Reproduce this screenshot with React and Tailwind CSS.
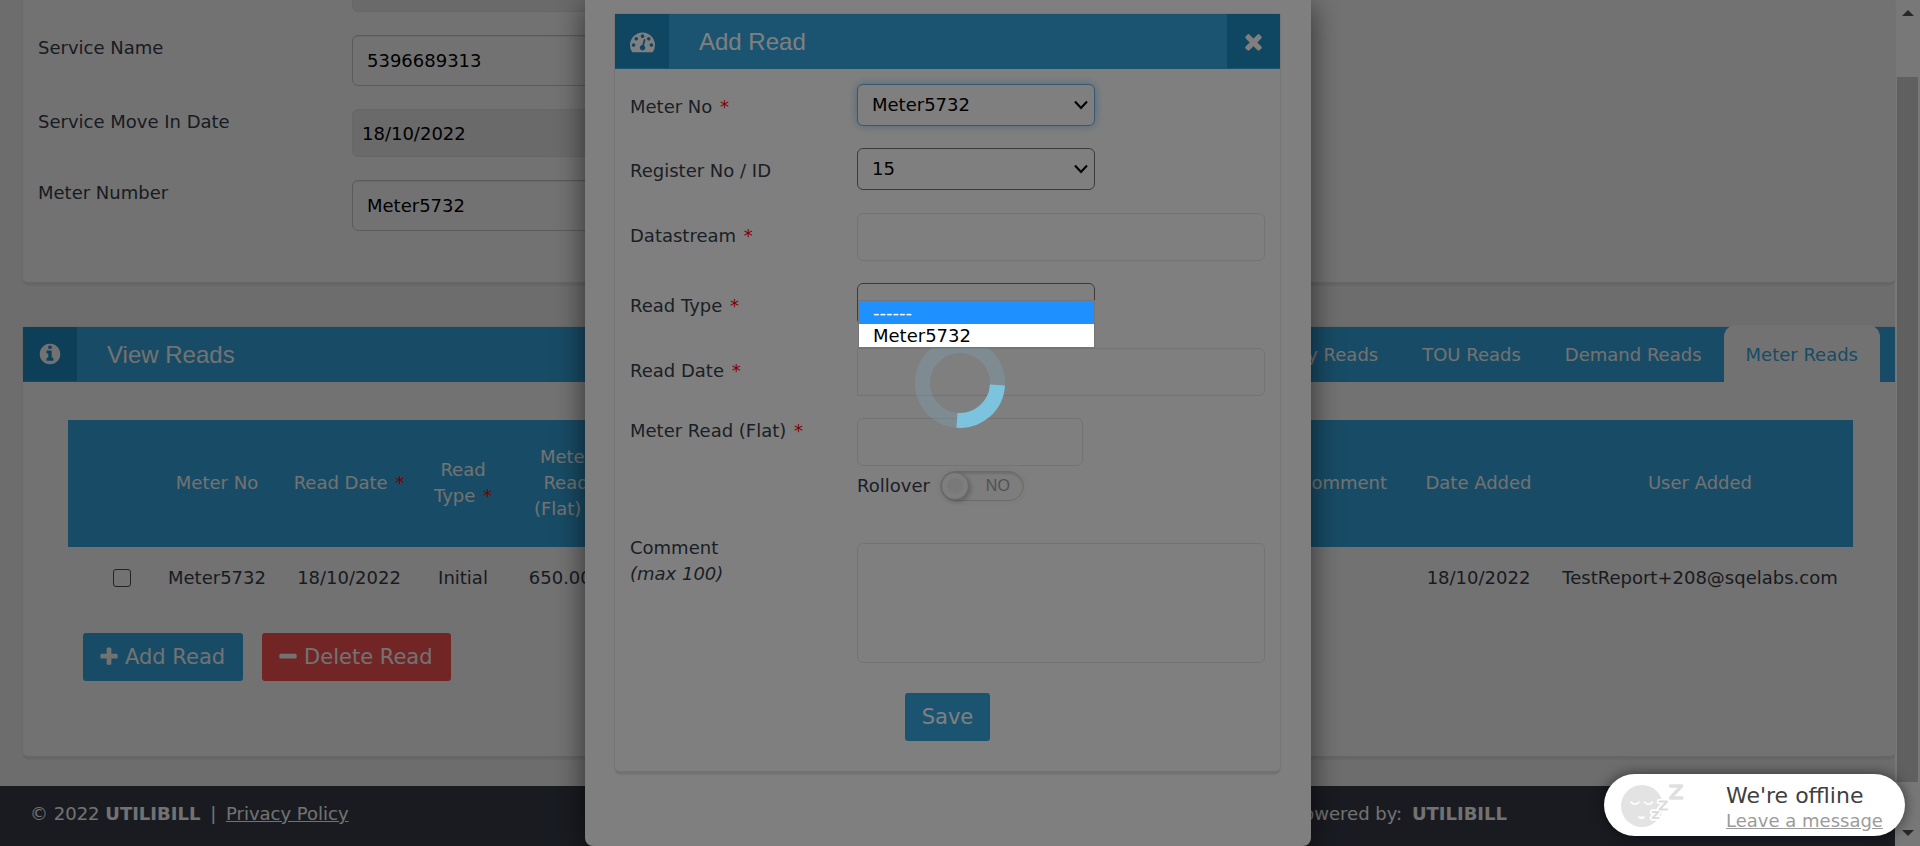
const iconPaths = {
  info: "M1152 1376v-160q0-14-9-23t-23-9h-96v-512q0-14-9-23t-23-9h-320q-14 0-23 9t-9 23v160q0 14 9 23t23 9h96v320h-96q-14 0-23 9t-9 23v160q0 14 9 23t23 9h448q14 0 23-9t9-23zm-128-896v-160q0-14-9-23t-23-9h-192q-14 0-23 9t-9 23v160q0 14 9 23t23 9h192q14 0 23-9t9-23zm640 416q0 209-103 385.5t-279.5 279.5-385.5 103-385.5-103-279.5-279.5-103-385.5 103-385.5 279.5-279.5 385.5-103 385.5 103 279.5 279.5 103 385.5z",
  times: "M1490 1322q0 40-28 68l-136 136q-28 28-68 28t-68-28l-294-294-294 294q-28 28-68 28t-68-28l-136-136q-28-28-28-68t28-68l294-294-294-294q-28-28-28-68t28-68l136-136q28-28 68-28t68 28l294 294 294-294q28-28 68-28t68 28l136 136q28 28 28 68t-28 68l-294 294 294 294q28 28 28 68z",
  plus: "M1600 736v192q0 40-28 68t-68 28h-416v416q0 40-28 68t-68 28h-192q-40 0-68-28t-28-68v-416h-416q-40 0-68-28t-28-68v-192q0-40 28-68t68-28h416v-416q0-40 28-68t68-28h192q40 0 68 28t28 68v416h416q40 0 68 28t28 68z",
  minus: "M1600 736v192q0 40-28 68t-68 28h-1216q-40 0-68-28t-28-68v-192q0-40 28-68t68-28h1216q40 0 68 28t28 68z",
  gauge: "M384 1152q0-53-37.5-90.5t-90.5-37.5-90.5 37.5-37.5 90.5 37.5 90.5 90.5 37.5 90.5-37.5 37.5-90.5zm192-448q0-53-37.5-90.5t-90.5-37.5-90.5 37.5-37.5 90.5 37.5 90.5 90.5 37.5 90.5-37.5 37.5-90.5zm428 481l101-382q6-26-7.5-48.5t-38.5-29.5-48 6.5-30 39.5l-101 382q-60 5-107 43.5t-63 98.5q-20 77 20 146t117 89 146-20 89-117q16-60-6-117t-72-91zm660-33q0-53-37.5-90.5t-90.5-37.5-90.5 37.5-37.5 90.5 37.5 90.5 90.5 37.5 90.5-37.5 37.5-90.5zm-640-640q0-53-37.5-90.5t-90.5-37.5-90.5 37.5-37.5 90.5 37.5 90.5 90.5 37.5 90.5-37.5 37.5-90.5zm448 192q0-53-37.5-90.5t-90.5-37.5-90.5 37.5-37.5 90.5 37.5 90.5 90.5 37.5 90.5-37.5 37.5-90.5zm320 448q0 261-141 483-19 29-54 29h-1402q-35 0-54-29-141-221-141-483 0-182 71-348t191-286 286-191 348-71 348 71 286 191 191 286 71 348z",
};

const Icon = ({ name, size }) => (
  <svg width={size} height={size} viewBox="0 0 1792 1792" fill="#fff" aria-hidden="true">
    <path d={iconPaths[name]} />
  </svg>
);

const Required = () => <span className="ml-0.5 text-[#ff0000]"> *</span>;

function PageRow({ id, label, value, locked }) {
  return (
    <div className="flex">
      <label htmlFor={id} className="w-[314px] leading-[26px]">{label}</label>
      <input
        id={id}
        defaultValue={value}
        disabled={locked}
        className={
          locked
            ? "h-12 w-[500px] rounded-md border border-[#e6e6e6] bg-[#eeeeee] px-[9px] text-black"
            : "h-[51px] w-[500px] rounded-md border border-[#cccccc] bg-white px-3.5 text-black shadow-[inset_0_1px_1px_rgba(0,0,0,0.075)]"
        }
      />
    </div>
  );
}

function SelectBox({ id, value, focused }) {
  return (
    <div className="relative w-[238px]">
      <select
        id={id}
        defaultValue={value}
        className={
          focused
            ? "block h-[42px] w-full appearance-none rounded-md border border-[#66afe9] bg-white pl-3.5 text-black shadow-[0_0_10px_rgba(102,175,233,0.6)]"
            : "block h-[42px] w-full appearance-none rounded-md border border-[#767676] bg-white pl-3.5 text-black"
        }
      >
        <option>{value}</option>
      </select>
      <svg className="pointer-events-none absolute right-[7px] top-[16px]" width="14" height="10" viewBox="0 0 14 10" fill="none" stroke="#000" strokeWidth="2">
        <path d="M1 1.5 7 8l6-6.5" />
      </svg>
    </div>
  );
}

function FormRow({ id, label, required, gap, children }) {
  return (
    <div className={gap}>
      <div className="flex">
        <label htmlFor={id} className="w-[227px] shrink-0 pt-2.5 leading-[26px]">
          {label}
          {required && <Required />}
        </label>
        {children}
      </div>
    </div>
  );
}

const tabs = ["Daily Reads", "TOU Reads", "Demand Reads"];
const panel = "bg-white shadow-[0_0_2px_rgba(0,0,0,0.15)] border-b-[3px] border-[#e4e4e4]";
const modalInput = "rounded-md border border-[#e6e6e6] bg-white px-2.5";

function Page() {
  return (
    <div className="flex flex-col bg-[#f4f4f4]">
      <main className="flex-1 pl-[23px]">
        <section className={`${panel} h-[285px] overflow-hidden rounded-b-md pl-[15px]`}>
          <div className="-mt-9 flex flex-col gap-[23px]">
            <PageRow id="service-no" label="" value="" locked />
            <PageRow id="service-name" label="Service Name" value="5396689313" />
            <PageRow id="move-in" label="Service Move In Date" value="18/10/2022" locked />
            <PageRow id="meter-number" label="Meter Number" value="Meter5732" />
          </div>
        </section>

        <section className={`${panel} mt-[42px] rounded-b-md`}>
          <header className="flex h-[55px] bg-[#36a9e1]">
            <div className="flex h-[54px] w-[54px] items-center justify-center bg-[#1e8fc6]">
              <Icon name="info" size={24} />
            </div>
            <h2 className="pl-[30px] font-['Liberation_Sans',sans-serif] text-2xl leading-[55px] text-white">View Reads</h2>
            <nav className="ml-auto flex pr-[15px]">
              {tabs.map((t) => (
                <a key={t} href="#" className="px-[22px] leading-[55px] text-white">{t}</a>
              ))}
              <a href="#" className="-mt-0.5 h-[57px] rounded-t-xl bg-white px-[22px] leading-[59px] text-[#36a9e1]">Meter Reads</a>
            </nav>
          </header>
          <div className="pb-[75px] pl-[45px] pr-[42px] pt-[38px]">
            <table className="w-full table-fixed text-center">
              <colgroup>
                <col className="w-[85px]" />
                <col className="w-32" />
                <col className="w-[136px]" />
                <col className="w-[92px]" />
                <col className="w-[114px]" />
                <col />
                <col className="w-[130px]" />
                <col className="w-[137px]" />
                <col className="w-[306px]" />
              </colgroup>
              <thead>
                <tr className="h-[127px] bg-[#36a9e1] leading-[26px] text-white">
                  <th />
                  <th className="pb-0.5 font-normal">Meter No</th>
                  <th className="pb-0.5 font-normal">Read Date<Required /></th>
                  <th className="pb-0.5 font-normal">Read<br />Type<Required /></th>
                  <th className="pb-0.5 font-normal">Meter<br />Read<br />(Flat)<Required /></th>
                  <th />
                  <th className="pb-0.5 pr-1 font-normal">Comment</th>
                  <th className="pb-0.5 font-normal">Date Added</th>
                  <th className="pb-0.5 font-normal">User Added</th>
                </tr>
              </thead>
              <tbody>
                <tr className="h-[61px] leading-[26px]">
                  <td className="pl-[22px]">
                    <input type="checkbox" aria-label="Select Meter5732" className="mx-auto block h-[18px] w-[18px] appearance-none rounded-[3px] border border-[#505050]" />
                  </td>
                  <td>Meter5732</td>
                  <td>18/10/2022</td>
                  <td>Initial</td>
                  <td>650.000</td>
                  <td />
                  <td />
                  <td>18/10/2022</td>
                  <td>TestReport+208@sqelabs.com</td>
                </tr>
              </tbody>
            </table>
            <div className="flex gap-[19px] pl-[15px] pt-[25px] text-[21px]">
              <button className="flex h-12 items-center gap-[5px] rounded-[3px] bg-[#36a9e1] pl-[15px] pr-[18px] text-white"><Icon name="plus" size={22} />Add Read</button>
              <button className="flex h-12 items-center gap-[5px] rounded-[3px] bg-[#ff5454] pl-[15px] pr-[18px] text-white"><Icon name="minus" size={22} />Delete Read</button>
            </div>
          </div>
        </section>
      </main>
      <footer className="mt-[27px] flex h-[60px] justify-between bg-[#383e4b] pl-[30px] pr-[388px] leading-[56px] text-white">
        <p>© 2022 <b>UTILIBILL</b> <span className="mx-1">|</span> <a href="#" className="underline">Privacy Policy</a></p>
        <p>Powered by: <b className="ml-1">UTILIBILL</b></p>
      </footer>
    </div>
  );
}

function AddReadDialog() {
  return (
    <div role="dialog" aria-label="Add Read" className="h-full w-[726px] rounded-b-lg bg-white pl-[30px] pr-[31px] pt-3.5 shadow-[0_5px_30px_rgba(0,0,0,0.6)]">
      <div className="rounded-b-md border-b-[3px] border-[#e4e4e4] bg-white shadow-[0_0_2px_rgba(0,0,0,0.25)]">
        <header className="flex h-[55px] bg-[#36a9e1]">
          <div className="flex h-[54px] w-[54px] items-center justify-center bg-[#1e8fc6]">
            <Icon name="gauge" size={25} />
          </div>
          <h2 className="flex-1 pl-[30px] font-['Liberation_Sans',sans-serif] text-2xl leading-[55px] text-white">Add Read</h2>
          <button aria-label="Close" className="flex h-[54px] w-[53px] items-center justify-center bg-[#1e8fc6]">
            <Icon name="times" size={25} />
          </button>
        </header>
        <form className="px-[15px] pb-[30px] pt-[15px]">
          <FormRow id="meter" label="Meter No" required gap="mb-[22px]">
            <SelectBox id="meter" value="Meter5732" focused />
          </FormRow>
          <FormRow id="register" label="Register No / ID" gap="mb-[23px]">
            <SelectBox id="register" value="15" />
          </FormRow>
          <FormRow id="datastream" label="Datastream" required gap="mb-[22px]">
            <input id="datastream" className={`${modalInput} h-12 min-w-0 flex-1`} />
          </FormRow>
          <FormRow id="read-type" label="Read Type" required gap="mb-[23px]">
            <SelectBox id="read-type" value="" />
          </FormRow>
          <FormRow id="read-date" label="Read Date" required gap="mb-[22px]">
            <input id="read-date" className="h-12 min-w-0 flex-1 rounded-r-md border border-[#e6e6e6] bg-white px-2.5" />
          </FormRow>
          <div className="flex">
            <label htmlFor="meter-read" className="w-[227px] leading-[26px]">Meter Read (Flat)<Required /></label>
            <div>
              <input id="meter-read" className={`${modalInput} block h-12 w-[226px]`} />
              <div className="mt-[5px] flex items-center gap-2.5">
                <label htmlFor="rollover">Rollover</label>
                <span className="relative flex h-[30px] w-[84px] rounded-full border border-[#d6d6d6] bg-[#fafafa] shadow-[inset_0_2px_2px_rgba(0,0,0,0.12),0_0_0_4px_rgba(0,0,0,0.02)]">
                  <input id="rollover" type="checkbox" role="switch" className="absolute inset-0 appearance-none" />
                  <span className="flex size-7 items-center justify-center rounded-full border border-[#d0d0d0] bg-[#fcfcfc] shadow-[2px_2px_4px_rgba(0,0,0,0.2)]">
                    <span className="size-4 rounded-full bg-[#f2f2f2]" />
                  </span>
                  <span className="flex-1 pl-1 text-center font-['Liberation_Sans',sans-serif] text-base leading-7 text-[#a4a4a4]">NO</span>
                </span>
              </div>
            </div>
          </div>
          <div className="mt-[34px] flex">
            <label htmlFor="comment" className="w-[227px] leading-[26px]">Comment<br /><i>(max 100)</i></label>
            <textarea id="comment" className={`${modalInput} mt-2 h-[120px] min-w-0 flex-1 resize-none`} />
          </div>
          <div className="mt-[30px] flex justify-center">
            <button type="button" className="h-12 rounded-[3px] bg-[#36a9e1] px-[17px] text-[21px] text-white">Save</button>
          </div>
        </form>
      </div>
    </div>
  );
}

function Scrollbar() {
  return (
    <div aria-hidden="true" className="flex w-[25px] flex-col items-center bg-[#f1f1f1] py-2.5">
      <svg width="12" height="6" viewBox="0 0 12 6" fill="#505050"><path d="M6 0l6 6H0z" /></svg>
      <div className="mb-[48px] mt-[61px] w-[21px] flex-1 bg-[#c1c1c1]" />
      <svg width="12" height="6" viewBox="0 0 12 6" fill="#505050"><path d="M6 6l6-6H0z" /></svg>
    </div>
  );
}

function Chat() {
  return (
    <a href="#" className="absolute bottom-2.5 right-[15px] flex h-[62px] w-[301px] items-center rounded-full bg-white pl-4 shadow-[0_0_14px_rgba(0,0,0,0.55)]">
      <svg width="66" height="46" viewBox="0 0 66 46">
        <circle cx="22" cy="24" r="21" fill="#e3e3e3" />
        <g fill="none" stroke="#fff" strokeWidth="1.6" strokeLinecap="round">
          <path d="M11 20q4 4.500 8 0" />
          <path d="M24.500 20q4 4.500 8 0" />
        </g>
        <path d="M17.500 34.500h8q-1 2.500-4 2.500t-4-2.500z" fill="#fff" />
        <g fill="none" strokeLinejoin="round" strokeLinecap="round">
          <path d="M32.500 30h6l-6 6h6M39.500 19.500h7.500l-7.500 8h7.500" stroke="#fff" strokeWidth="5.500" />
          <path d="M32.500 30h6l-6 6h6M39.500 19.500h7.500l-7.500 8h7.500" stroke="#dcdcdc" strokeWidth="2.200" />
          <path d="M50.500 4h11l-11 12h11.500" stroke="#e0e0e0" strokeWidth="3.600" />
        </g>
      </svg>
      <span className="ml-10 flex flex-col pt-1.5">
        <span className="text-[22px] leading-[26px] text-[#404040]">We're offline</span>
        <span className="leading-6 text-[#9b9b9b] underline">Leave a message</span>
      </span>
    </a>
  );
}

export default function App() {
  return (
    <div className="relative flex overflow-hidden font-['DejaVu_Sans',sans-serif] text-lg text-[#383e4b]">
      <div className="relative min-w-0 flex-1">
        <Page />
        <div className="absolute inset-0 bg-black/10" />
      </div>
      <Scrollbar />
      <div className="absolute inset-0 flex justify-center pr-6">
        <AddReadDialog />
      </div>
      <div className="absolute inset-0 bg-black/50" />
      <svg className="absolute left-1/2 top-[338px] -ml-[45px]" width="90" height="90" viewBox="0 0 90 90" fill="none" strokeWidth="15">
        <circle cx="45" cy="45" r="37.500" stroke="#7cc4de" strokeOpacity="0.2" />
        <path d="M82.450 47A37.500 37.500 0 0 1 42 82.380" stroke="#7cc4de" />
      </svg>
      <ul role="listbox" aria-label="Meter No" className="absolute left-1/2 top-[300px] -ml-[102px] w-[237px] border border-[#767676] bg-white text-black">
        <li role="option" aria-selected="true" className="bg-[#1e90ff] pl-3.5 leading-[23px] text-white">------</li>
        <li role="option" aria-selected="false" className="pl-3.5 leading-[23px]">Meter5732</li>
      </ul>
      <Chat />
    </div>
  );
}
